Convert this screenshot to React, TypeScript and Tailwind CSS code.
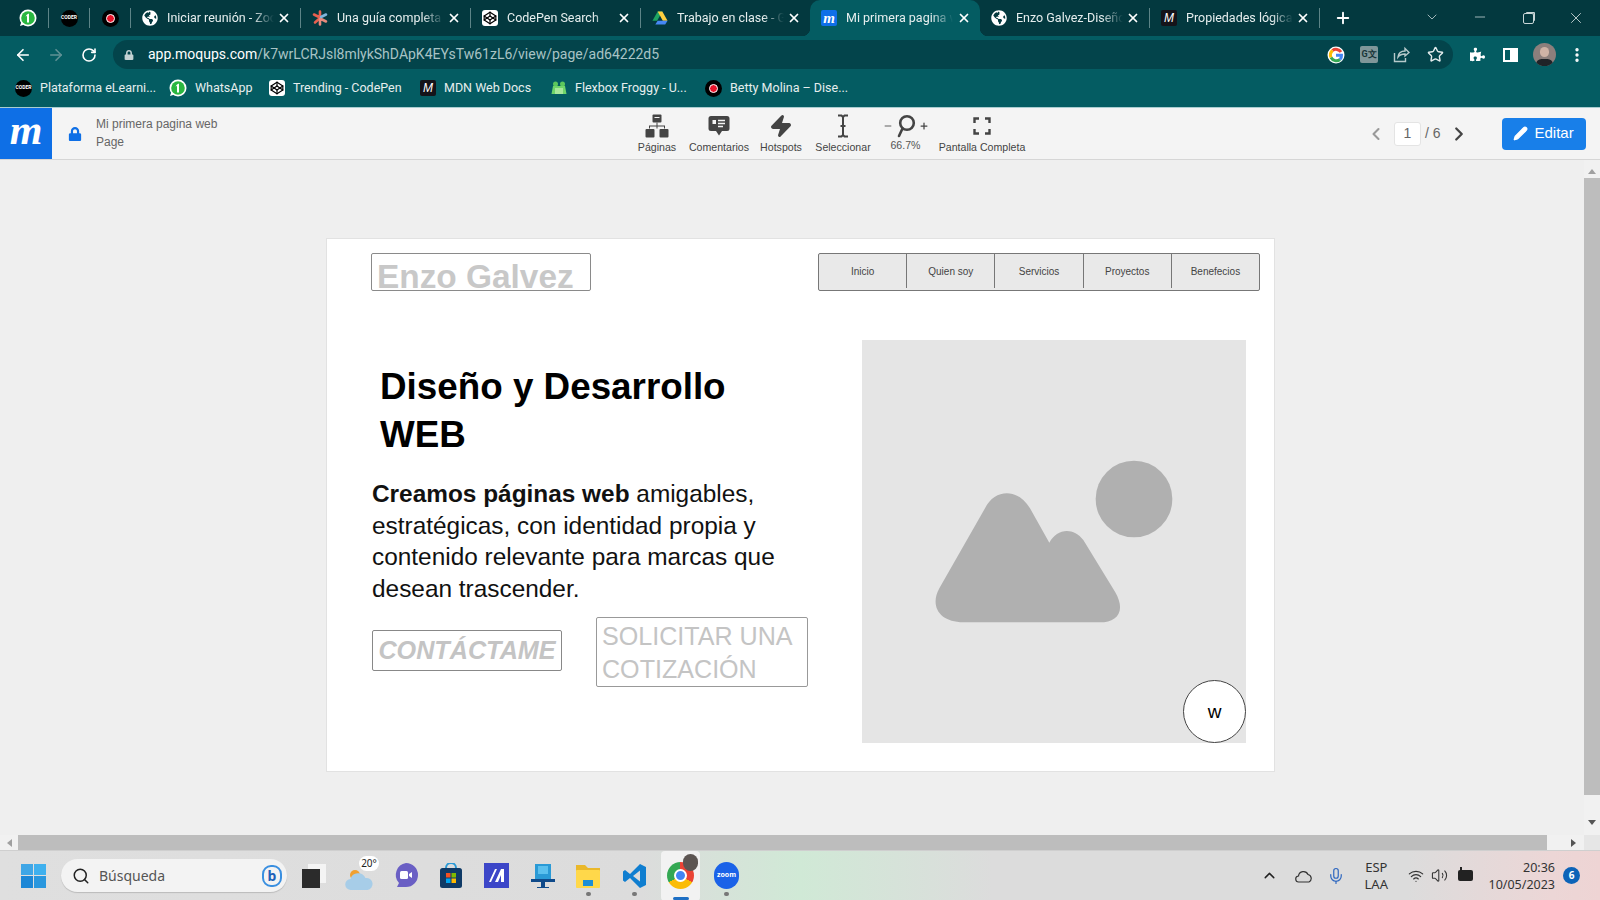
import { ReactNode } from "react";
import {
  ArrowLeft,
  ArrowRight,
  ChevronDown,
  ChevronLeft,
  ChevronRight,
  ChevronUp,
  Codepen,
  Mic,
  Minus,
  MoreVertical,
  Pencil,
  Plus,
  RotateCw,
  Search,
  Star,
  Volume2,
  Wifi,
  X,
  Zap,
} from "lucide-react";
import { FaGlobeAmericas, FaLock, FaPuzzlePiece } from "react-icons/fa";

const WhatsApp = () => (
  <svg width="18" height="18" viewBox="0 0 18 18">
    <circle cx="9" cy="9" r="8.5" fill="#fff" />
    <path d="M1 17l1.500-4.500 3 3z" fill="#fff" />
    <circle cx="9" cy="9" r="6.800" fill="#2bb741" />
    <path d="M8 5.500l2-1v9H8V7l-1.500.5z" fill="#fff" />
  </svg>
);

const Coder = () => (
  <span className="flex h-[17px] w-[17px] items-center justify-center rounded-full bg-black text-[5px] font-bold text-white">
    CODER
  </span>
);

const RedDot = () => (
  <span className="flex h-[17px] w-[17px] items-center justify-center rounded-full bg-black">
    <span className="h-[9px] w-[9px] rounded-full border border-white bg-[#e8142a]" />
  </span>
);

const Globe = () => <FaGlobeAmericas className="h-4 w-4 text-white" />;

const Asterisk = () => (
  <svg width="16" height="16" viewBox="0 0 16 16" strokeWidth="2.600" strokeLinecap="round">
    <path d="M8 1.500v5.500M2 4.500l5 2.500M3 12.500l4.500-4" stroke="#e9604f" />
    <path d="M8 9v5.500M14 11.500L9 9" stroke="#e78a7c" />
    <path d="M14 4.500L9 7" stroke="#7fb6dd" />
  </svg>
);

const CodepenIcon = () => (
  <span className="flex h-4 w-4 items-center justify-center rounded-[3px] bg-white">
    <Codepen className="h-[14px] w-[14px] text-black" strokeWidth={2} />
  </span>
);

const Drive = () => (
  <svg width="17" height="16" viewBox="0 0 17 16">
    <path d="M6 1h5l-3 5.500L5.500 11H0.500z" fill="#1ea362" />
    <path d="M6 1h5l5.500 10h-5z" fill="#ffcf3f" />
    <path d="M3.500 15l2.500-4h10.500l-2.500 4z" fill="#4688f4" />
  </svg>
);

const MoqupsFav = () => (
  <span className="flex h-4 w-4 items-center justify-center rounded-[2px] bg-[#0f6fe8] font-['Liberation_Serif',serif] text-[15px] leading-none font-bold text-white italic">
    m
  </span>
);

const MdnFav = () => (
  <span className="flex h-4 w-4 items-center justify-center rounded-[2px] bg-[#15141a] font-['Liberation_Sans',sans-serif] text-[12px] leading-none text-white italic">
    M
  </span>
);

const Froggy = () => (
  <svg width="16" height="16" viewBox="0 0 16 16">
    <circle cx="4.500" cy="4" r="2.500" fill="#5cc75c" />
    <circle cx="11.500" cy="4" r="2.500" fill="#5cc75c" />
    <path d="M2 6h12l1.500 8h-15z" fill="#6fd56a" />
    <rect x="4" y="8" width="8" height="6" fill="#a8e89a" />
  </svg>
);

const tabs: { title: string; icon: ReactNode; active?: boolean; sep?: boolean }[] = [
  { title: "Iniciar reunión - Zoom", icon: <Globe />, sep: true },
  { title: "Una guía completa", icon: <Asterisk />, sep: true },
  { title: "CodePen Search", icon: <CodepenIcon />, sep: true },
  { title: "Trabajo en clase - Goo", icon: <Drive /> },
  { title: "Mi primera pagina web", icon: <MoqupsFav />, active: true },
  { title: "Enzo Galvez-Diseño", icon: <Globe />, sep: true },
  { title: "Propiedades lógicas", icon: <MdnFav />, sep: true },
];

const bookmarks = [
  { title: "Plataforma eLearni...", icon: <Coder />, w: "w-[154px]" },
  { title: "WhatsApp", icon: <WhatsApp />, w: "w-[100px]" },
  { title: "Trending - CodePen", icon: <CodepenIcon />, w: "w-[151px]" },
  { title: "MDN Web Docs", icon: <MdnFav />, w: "w-[131px]" },
  { title: "Flexbox Froggy - U...", icon: <Froggy />, w: "w-[154px]" },
  { title: "Betty Molina – Dise...", icon: <RedDot />, w: "w-[150px]" },
];

function ChromeTabs() {
  return (
    <div className="flex h-9 items-center bg-[#03393f] pl-[8px] text-[12.5px] text-[#e6eeee]">
      {[<WhatsApp key="w" />, <Coder key="c" />, <RedDot key="r" />].map((icon, i) => (
        <div key={i} className="flex items-center">
          <div className="flex w-[40px] justify-center">{icon}</div>
          <span className="h-[20px] w-px bg-[#5d8487]" />
        </div>
      ))}
      {tabs.map((tab) => (
        <div key={tab.title} className="flex items-center">
          <div
            className={`relative flex h-9 items-center pr-[9px] pl-[11px] ${
              tab.active ? "w-[170px] rounded-t-[10px] bg-[#045c62]" : "w-[169px]"
            }`}
          >
            {tab.active && (
              <>
                <span className="absolute bottom-0 -left-[8px] h-[8px] w-[8px] bg-[radial-gradient(circle_at_0_0,transparent_8px,#045c62_8.5px)]" />
                <span className="absolute -right-[8px] bottom-0 h-[8px] w-[8px] bg-[radial-gradient(circle_at_100%_0,transparent_8px,#045c62_8.5px)]" />
              </>
            )}
            <div className="flex w-4 shrink-0 justify-center">{tab.icon}</div>
            <span className="ml-[9px] w-[107px] overflow-hidden whitespace-nowrap [mask-image:linear-gradient(to_right,black_80%,transparent)]">
              {tab.title}
            </span>
            <X className="ml-auto h-[14px] w-[14px] text-white" strokeWidth={3} />
          </div>
          {tab.sep && <span className="h-[20px] w-px bg-[#5d8487]" />}
        </div>
      ))}
      <Plus className="ml-[14px] h-[18px] w-[18px] text-white" strokeWidth={2.5} />
      <div className="ml-auto flex text-[#c8d6d7]">
        <div className="flex w-12 justify-center">
          <ChevronDown className="h-4 w-4" strokeWidth={1.2} />
        </div>
        <div className="flex w-12 justify-center">
          <Minus className="h-4 w-4" strokeWidth={1.2} />
        </div>
        <div className="flex w-12 items-center justify-center">
          <span className="h-[11px] w-[11px] rounded-[2px] border border-[#c8d6d7] shadow-[2px_-2px_0_-1px_#c8d6d7]" />
        </div>
        <div className="flex w-12 justify-center">
          <X className="h-[18px] w-[18px]" strokeWidth={1.2} />
        </div>
      </div>
    </div>
  );
}

function AddressBar() {
  return (
    <div className="flex h-[35px] items-center bg-[#045c62] pt-[2px] pl-[14px] text-white">
      <ArrowLeft className="h-[18px] w-[18px]" strokeWidth={2.2} />
      <ArrowRight className="ml-[15px] h-[18px] w-[18px] text-[#5f9195]" strokeWidth={2.2} />
      <RotateCw className="ml-[16px] h-[16px] w-[16px]" strokeWidth={2.4} />
      <div className="ml-[16px] flex h-[29px] w-[1340px] items-center rounded-full bg-[#03444b] pl-[11px]">
        <FaLock className="h-[10px] w-[10px] text-[#c4d2d3]" />
        <span className="ml-[14px] text-[14px] text-[#a8c3c5]">
          <span className="text-white">app.moqups.com</span>/k7wrLCRJsl8mlykShDApK4EYsTw61zL6/view/page/ad64222d5
        </span>
        <div className="ml-auto flex items-center gap-[15px] pr-[9px]">
          <svg width="18" height="18" viewBox="0 0 18 18" fill="none" strokeWidth="3">
            <circle cx="9" cy="9" r="8.500" fill="#fff" stroke="none" />
            <path d="M14 6a6 6 0 0 0-8.500-1.500" stroke="#ea4335" />
            <path d="M5.500 4.500A6 6 0 0 0 4 11.500" stroke="#fbbc05" />
            <path d="M4 11.500a6 6 0 0 0 9 2" stroke="#34a853" />
            <path d="M9 9.200h5.500a5.500 5.500 0 0 1-1.500 4.300" stroke="#4285f4" />
          </svg>
          <span className="flex h-[17px] w-[18px] items-center justify-center rounded-[2px] bg-[#7f9699] text-[9px] font-bold text-[#173538]">
            G文
          </span>
          {/* share: arrow leaving an open box */}
          <svg width="17" height="17" viewBox="0 0 17 17" fill="none" stroke="#b7cacb" strokeWidth="1.400">
            <path d="M1.500 7v8.500h11V12" />
            <path d="M5 11c.5-4 3.500-6 7-6V2.500L16 6.500 12 10V8c-3 0-5.500 1-7 3z" />
          </svg>
          <Star className="ml-[2px] h-[17px] w-[17px] text-[#e3ebec]" strokeWidth={2} />
        </div>
      </div>
      <FaPuzzlePiece className="ml-[17px] h-[15px] w-[15px]" />
      <span className="ml-[18px] flex h-[14px] w-[15px] border-2 border-white">
        <span className="ml-auto h-full w-[6px] bg-white" />
      </span>
      <span className="relative ml-[15px] h-[23px] w-[23px] overflow-hidden rounded-full bg-[#8c7f7c]">
        <span className="absolute top-[4px] left-[7px] h-[10px] w-[9px] rounded-full bg-[#cfb3a6]" />
        <span className="absolute -bottom-[4px] left-[3px] h-[11px] w-[17px] rounded-full bg-[#1f2328]" />
      </span>
      <MoreVertical className="ml-[12px] h-[18px] w-[18px]" strokeWidth={2.5} />
    </div>
  );
}

function Bookmarks() {
  return (
    <div className="flex h-[37px] items-center border-b border-[#a9cdd0] bg-[#045c62] pb-[2px] pl-[15px] text-[12.5px] text-[#e6eeee]">
      {bookmarks.map((b) => (
        <div key={b.title} className={`flex items-center gap-[8px] whitespace-nowrap ${b.w}`}>
          {b.icon}
          <span>{b.title}</span>
        </div>
      ))}
    </div>
  );
}

const PagesIcon = () => (
  <svg width="24" height="24" viewBox="0 0 24 24" fill="#444">
    <rect x="7.500" y="0.500" width="9" height="8" rx="1" />
    <path d="M11.500 8.500h1v3H20v3h-1v-2H12.500v2h-1v-2H5v2H4v-3h7.500z" />
    <rect x="0.500" y="15" width="9" height="8.500" rx="1" />
    <rect x="14.500" y="15" width="9" height="8.500" rx="1" />
    <rect x="9.500" y="3" width="5" height="1" fill="#f4f4f4" />
  </svg>
);

const CommentIcon = () => (
  <svg width="22" height="22" viewBox="0 0 22 22">
    <path d="M3 1h16a2.500 2.500 0 0 1 2.500 2.500v10A2.500 2.500 0 0 1 19 16h-5l-3 4.500L8 16H3a2.500 2.500 0 0 1-2.500-2.500v-10A2.500 2.500 0 0 1 3 1z" fill="#444" />
    <path d="M10 5.500h7M10 8.500h7M10 11.500h5" stroke="#f4f4f4" strokeWidth="1.500" />
    <rect x="4.500" y="5" width="3.500" height="4" fill="#f4f4f4" />
  </svg>
);

const BeamIcon = () => (
  <svg width="14" height="24" viewBox="0 0 14 24" fill="none" stroke="#444" strokeWidth="2">
    <path d="M2 1.500h3.500L7 3l1.500-1.500H12M2 22.500h3.500L7 21l1.500 1.500H12M7 3v18M4.500 12h5" />
  </svg>
);

const MagnifierIcon = () => (
  <svg width="20" height="24" viewBox="0 0 20 24" fill="none" stroke="#444" strokeWidth="2.600">
    <circle cx="11" cy="9" r="6.800" />
    <path d="M6.500 14.500L3 22" strokeLinecap="round" />
  </svg>
);

const FullIcon = () => (
  <svg width="18" height="18" viewBox="0 0 18 18" fill="none" stroke="#444" strokeWidth="2.400">
    <path d="M1.500 6V1.500H6M12 1.500h4.500V6M16.500 12v4.500H12M6 16.500H1.500V12" />
  </svg>
);

const tools: { label: string; icon: ReactNode }[] = [
  { label: "Páginas", icon: <PagesIcon /> },
  { label: "Comentarios", icon: <CommentIcon /> },
  { label: "Hotspots", icon: <Zap className="h-[24px] w-[24px] fill-[#444] text-[#444]" /> },
  { label: "Seleccionar", icon: <BeamIcon /> },
];

function Toolbar() {
  return (
    <div className="flex h-[52px] items-center border-b border-[#d6d6d6] bg-[#f4f4f4] font-['Liberation_Sans',Arial,sans-serif] text-[#666]">
      <div className="flex h-full w-[52px] items-center justify-center bg-[#0e6fe6] pb-[8px] font-['Liberation_Serif',serif] text-[42px] leading-none font-bold text-white italic">
        m
      </div>
      <FaLock className="ml-[16px] h-[14px] w-[14px] text-[#0e6fe6]" />
      <div className="mb-[2px] ml-[14px] w-[120px] text-[12px] leading-[18px] whitespace-nowrap">
        <div>Mi primera pagina web</div>
        <div>Page</div>
      </div>
      <div className="ml-[410px] flex pt-px text-[10.6px] text-[#444]">
        {tools.map((t) => (
          <div key={t.label} className="flex w-[62px] flex-col items-center">
            <div className="flex h-[26px] items-center">{t.icon}</div>
            <span className="mt-[1px] whitespace-nowrap">{t.label}</span>
          </div>
        ))}
        <div className="flex w-[63px] flex-col items-center">
          <div className="flex h-[26px] items-center gap-[3px]">
            <Minus className="h-[10px] w-[10px]" strokeWidth={2} />
            <MagnifierIcon />
            <Plus className="h-[10px] w-[10px]" strokeWidth={3} />
          </div>
          <span className="-mt-px text-[10.6px] text-[#555]">66.7%</span>
        </div>
        <div className="ml-px flex w-[88px] flex-col items-center">
          <div className="flex h-[26px] items-center">
            <FullIcon />
          </div>
          <span className="mt-[1px] whitespace-nowrap">Pantalla Completa</span>
        </div>
      </div>
      <ChevronLeft className="ml-[340px] h-[20px] w-[20px] text-[#999]" strokeWidth={2.5} />
      <div className="ml-[8px] flex h-[24px] w-[27px] items-center justify-center rounded-[3px] border border-[#e4e4e4] bg-white text-[14px]">
        1
      </div>
      <span className="ml-[4px] text-[14px]">/ 6</span>
      <ChevronRight className="ml-[7px] h-[22px] w-[22px] text-[#444]" strokeWidth={2.5} />
      <button className="ml-[32px] flex h-[32px] w-[84px] items-center justify-center gap-[6px] rounded-[4px] bg-[#187fe9] text-[15px] text-white">
        <Pencil className="h-[15px] w-[15px] fill-white" />
        Editar
      </button>
    </div>
  );
}

const navItems = ["Inicio", "Quien soy", "Servicios", "Proyectos", "Benefecios"];

function MockPage() {
  return (
    <div className="ml-[326px] h-[534px] w-[949px] border border-[#e2e2e2] bg-white pt-[14px] pr-[14px] pl-[44px] font-['Liberation_Sans',Arial,sans-serif]">
      <div className="flex items-start justify-between">
        <div className="h-[38px] w-[220px] overflow-hidden rounded-[2px] border border-[#8a8a8a] pl-[5px] text-[33.4px] leading-[45px] font-bold whitespace-nowrap text-[#c8c8c8]">
          Enzo Galvez
        </div>
        <div className="flex h-[38px] w-[442px] rounded-[2px] border border-[#777] bg-[#e9e9e9] pb-[2px] text-[10px] text-[#444]">
          {navItems.map((item, i) => (
            <div key={item} className={`flex flex-1 items-center justify-center ${i > 0 ? "border-l border-[#777]" : ""}`}>
              {item}
            </div>
          ))}
        </div>
      </div>
      <div className="mt-[49px] flex justify-between pr-[14px]">
        <div className="w-[437px]">
          <h1 className="mt-[23px] ml-[9px] text-[36.8px] leading-[48px] font-bold text-black">
            Diseño y Desarrollo
            <br />
            WEB
          </h1>
          <p className="mt-[19px] ml-px text-[24.4px] leading-[31.7px] text-[#111]">
            <b className="font-bold">Creamos páginas web</b> amigables,
            <br />
            estratégicas, con identidad propia y
            <br />
            contenido relevante para marcas que
            <br />
            desean trascender.
          </p>
          <div className="mt-[12px] flex items-center">
            <div className="mb-[2px] ml-px flex h-[41px] w-[190px] items-center justify-center rounded-[2px] border border-[#888] text-[25.2px] font-bold whitespace-nowrap text-[#c4c4c4] italic">
              CONTÁCTAME
            </div>
            <div className="ml-[34px] h-[70px] w-[212px] rounded-[2px] border border-[#999] pt-[2px] pl-[5px] text-[25.1px] leading-[33px] text-[#c4c4c4]">
              SOLICITAR UNA
              <br />
              COTIZACIÓN
            </div>
          </div>
        </div>
        <div className="relative h-[403px] w-[384px] bg-[#e5e5e5]">
          <svg className="h-full w-full" viewBox="-114 -300 1152 1209" fill="#b0b0b0">
            <path d="M190 547C120 547 88 500 118 445L255 205C285 145 355 145 390 205L448 308C470 265 520 260 550 300L645 455C680 515 650 547 600 547Z" />
            <circle cx="702" cy="177" r="115" />
          </svg>
          <div className="absolute right-0 bottom-0 flex h-[63px] w-[63px] items-center justify-center rounded-full border border-[#444] bg-white pt-[2px] text-[19px] text-black">
            w
          </div>
        </div>
      </div>
    </div>
  );
}

const TaskIcon = ({ children, dot, w }: { children: ReactNode; dot?: boolean; w: string }) => (
  <div className={`relative flex h-[50px] items-center justify-center ${w}`}>
    {children}
    {dot && <span className="absolute bottom-[5px] h-[4px] w-[5px] rounded-full bg-[#777]" />}
  </div>
);

function Taskbar() {
  return (
    <div className="flex h-[50px] items-center border-t border-[#cfcfcf] bg-[linear-gradient(90deg,#dfdfdf_0%,#dcdcdc_40%,#d0e9d6_50%,#dcdcdc_62%,#dcdcdc_88%,#ecd6d6_97%,#eed4d4_100%)] font-['Noto_Sans',sans-serif] text-[#333]">
      <div className="ml-[21px] grid h-[24px] w-[25px] grid-cols-2 gap-[1.500px]">
        <span className="bg-[#3fa6e6]" />
        <span className="bg-[#3fb0ee]" />
        <span className="bg-[#1d87d6]" />
        <span className="bg-[#2a97de]" />
      </div>
      <div className="ml-[15px] flex h-[33px] w-[226px] items-center rounded-full bg-[#f3f3f3] pl-[11px] shadow-[0_1px_1px_#bbb]">
        <Search className="h-[18px] w-[18px] text-[#222]" strokeWidth={2} />
        <span className="ml-[9px] text-[14px] text-[#555]">Búsqueda</span>
        <span className="ml-auto mr-[5px] flex h-[22px] w-[20px] items-center justify-center rounded-[9px] border-2 border-[#3a8fe0] text-[14px] leading-none font-bold text-[#1e62b8]">
          b
        </span>
      </div>
      <TaskIcon w="w-[46px] ml-[4px]">
        <span className="relative h-[24px] w-[24px]">
          <span className="absolute top-0 right-0 h-[19px] w-[18px] bg-[#f4f4f4]" />
          <span className="absolute bottom-0 left-0 h-[19px] w-[18px] bg-[#2b2b2b]" />
        </span>
      </TaskIcon>
      <TaskIcon w="w-[46px]">
        <svg width="30" height="32" viewBox="0 0 30 32">
          <circle cx="10" cy="15" r="5" fill="#f0a030" />
          <path d="M6 30a5.500 5.500 0 0 1-.5-11 8 8 0 0 1 15-1 6 6 0 0 1 2 12z" fill="#a7cde8" />
        </svg>
        <span className="absolute top-[5px] right-[4px] flex h-[15px] w-[20px] items-center justify-center rounded-full bg-white text-[10px] leading-none text-[#222]">
          20°
        </span>
      </TaskIcon>
      <TaskIcon w="w-[45px]">
        <svg width="26" height="28" viewBox="0 0 26 28">
          <path d="M13 1a12 12 0 0 1 0 24H4l2-4A12 12 0 0 1 13 1z" fill="#6a5fc4" />
          <rect x="7" y="9" width="8" height="8" rx="1.500" fill="#fff" />
          <path d="M16 12l3-2v6l-3-2z" fill="#fff" />
        </svg>
      </TaskIcon>
      <TaskIcon w="w-[45px]">
        <svg width="24" height="26" viewBox="0 0 24 26">
          <path d="M7 5a5 5 0 0 1 10 0" fill="none" stroke="#2a9ad6" strokeWidth="2" />
          <rect x="1" y="5" width="22" height="20" rx="2.500" fill="#0f3a66" />
          <rect x="7" y="10" width="4.500" height="4.500" fill="#f25022" />
          <rect x="12.500" y="10" width="4.500" height="4.500" fill="#7fba00" />
          <rect x="7" y="15.500" width="4.500" height="4.500" fill="#00a4ef" />
          <rect x="12.500" y="15.500" width="4.500" height="4.500" fill="#ffb900" />
        </svg>
      </TaskIcon>
      <TaskIcon w="w-[47px]">
        <svg width="25" height="25" viewBox="0 0 25 25">
          <rect width="25" height="25" fill="#3c46c8" />
          <path d="M5 19L11 6h2L7 19zM11 19l6-13h3v13h-3V12l-3 7z" fill="#fff" />
        </svg>
      </TaskIcon>
      <TaskIcon w="w-[45px]">
        <svg width="26" height="26" viewBox="0 0 26 26">
          <rect x="5" y="1" width="16" height="17" fill="#2a9ad6" />
          <rect x="8" y="3" width="10" height="8" fill="#5bc0ee" />
          <path d="M1 16h24v3H15v5h4v1H7v-1h4v-5H1z" fill="#0f4a8a" />
        </svg>
      </TaskIcon>
      <TaskIcon w="w-[46px]" dot>
        <svg width="26" height="26" viewBox="0 0 26 26">
          <path d="M1 2h9l3 3h12v6H1z" fill="#eab82a" />
          <rect x="1" y="7" width="24" height="18" rx="1" fill="#ffd84a" />
          <rect x="8" y="17" width="10" height="6" fill="#1c8ed6" />
        </svg>
      </TaskIcon>
      <TaskIcon w="w-[46px]" dot>
        <svg width="25" height="26" viewBox="0 0 25 26">
          <path d="M18 1l6 3v18l-6 3L8 15l-5 4-2-1.500V8.500L3 7l5 4z" fill="#0f7ed0" />
          <path d="M18 7.500L11 13l7 5.500z" fill="#dcdcdc" />
        </svg>
      </TaskIcon>
      <TaskIcon w="w-[39px] mx-[4px] rounded-[4px] bg-[#f2f2f2]">
        <span className="relative h-[27px] w-[27px] rounded-full bg-[conic-gradient(#ea4335_0deg_120deg,#fbbc05_120deg_240deg,#34a853_240deg_360deg)]">
          <span className="absolute top-[7px] left-[7px] h-[13px] w-[13px] rounded-full border-[2px] border-white bg-[#4285f4]" />
        </span>
        <span className="absolute top-[3px] right-[2px] h-[17px] w-[15px] rounded-full bg-[#5c5552]" />
        <span className="absolute bottom-[1px] h-[3px] w-[16px] rounded-full bg-[#1d6fc4]" />
      </TaskIcon>
      <TaskIcon w="w-[45px]" dot>
        <span className="flex h-[27px] w-[25px] items-center justify-center rounded-full bg-[#1a62e8] text-[7px] font-bold text-white">
          zoom
        </span>
      </TaskIcon>
      <div className="ml-auto flex items-center">
        <ChevronUp className="h-[17px] w-[17px] text-[#222]" strokeWidth={2} />
        <svg className="ml-[17px]" width="18" height="14" viewBox="0 0 18 14" fill="#d9d9d9" stroke="#333" strokeWidth="1.200">
          <path d="M4 13a3 3 0 0 1-.5-6 5 5 0 0 1 9.500-1.500 4 4 0 0 1 1 7.500z" />
        </svg>
        <Mic className="ml-[14px] h-[18px] w-[18px] text-[#2f68c0]" strokeWidth={1.6} />
        <div className="ml-[20px] text-center text-[13px] leading-[17px] text-[#333]">
          <div>ESP</div>
          <div>LAA</div>
        </div>
        <Wifi className="ml-[20px] h-[16px] w-[16px]" strokeWidth={1.8} />
        <Volume2 className="ml-[7px] h-[17px] w-[17px]" strokeWidth={1.5} />
        <span className="relative ml-[10px] h-[11px] w-[15px] rounded-[2px] bg-[#222]">
          <span className="absolute -top-[3px] left-[2px] h-[4px] w-[2px] bg-[#222]" />
        </span>
        <div className="w-[82px] text-right text-[12.5px] leading-[17px] text-[#333]">
          <div>20:36</div>
          <div>10/05/2023</div>
        </div>
        <span className="mr-[20px] ml-[8px] flex h-[17px] w-[17px] items-center justify-center rounded-full bg-[#0c63b8] text-[10px] font-bold text-white">
          6
        </span>
      </div>
    </div>
  );
}

export default function App() {
  return (
    <div className="flex h-[900px] w-[1600px] flex-col overflow-hidden bg-[#efefef] font-['Roboto',sans-serif]">
      <ChromeTabs />
      <AddressBar />
      <Bookmarks />
      <Toolbar />
      {/* canvas + vertical scrollbar */}
      <div className="flex min-h-0 flex-1">
        <div className="flex-1 pt-[78px]">
          <MockPage />
        </div>
        <div className="flex w-[16px] flex-col items-center bg-[#f1f1f1]">
          <div className="mt-[9px] h-0 w-0 border-x-[4px] border-b-[5px] border-x-transparent border-b-[#a0a0a0]" />
          <div className="mt-[4px] h-[617px] w-full bg-[#bdbdbd]" />
          <div className="mt-[25px] h-0 w-0 border-x-[4px] border-t-[5px] border-x-transparent border-t-[#555]" />
        </div>
      </div>
      {/* horizontal scrollbar */}
      <div className="flex h-[15px] items-center bg-[#f1f1f1]">
        <div className="ml-[7px] h-0 w-0 border-y-[4px] border-r-[5px] border-y-transparent border-r-[#a0a0a0]" />
        <div className="ml-[6px] h-full w-[1529px] bg-[#bdbdbd]" />
        <div className="ml-[24px] h-0 w-0 border-y-[4px] border-l-[5px] border-y-transparent border-l-[#555]" />
        <div className="ml-auto h-full w-[16px] bg-[#e6e6e6]" />
      </div>
      <Taskbar />
    </div>
  );
}
